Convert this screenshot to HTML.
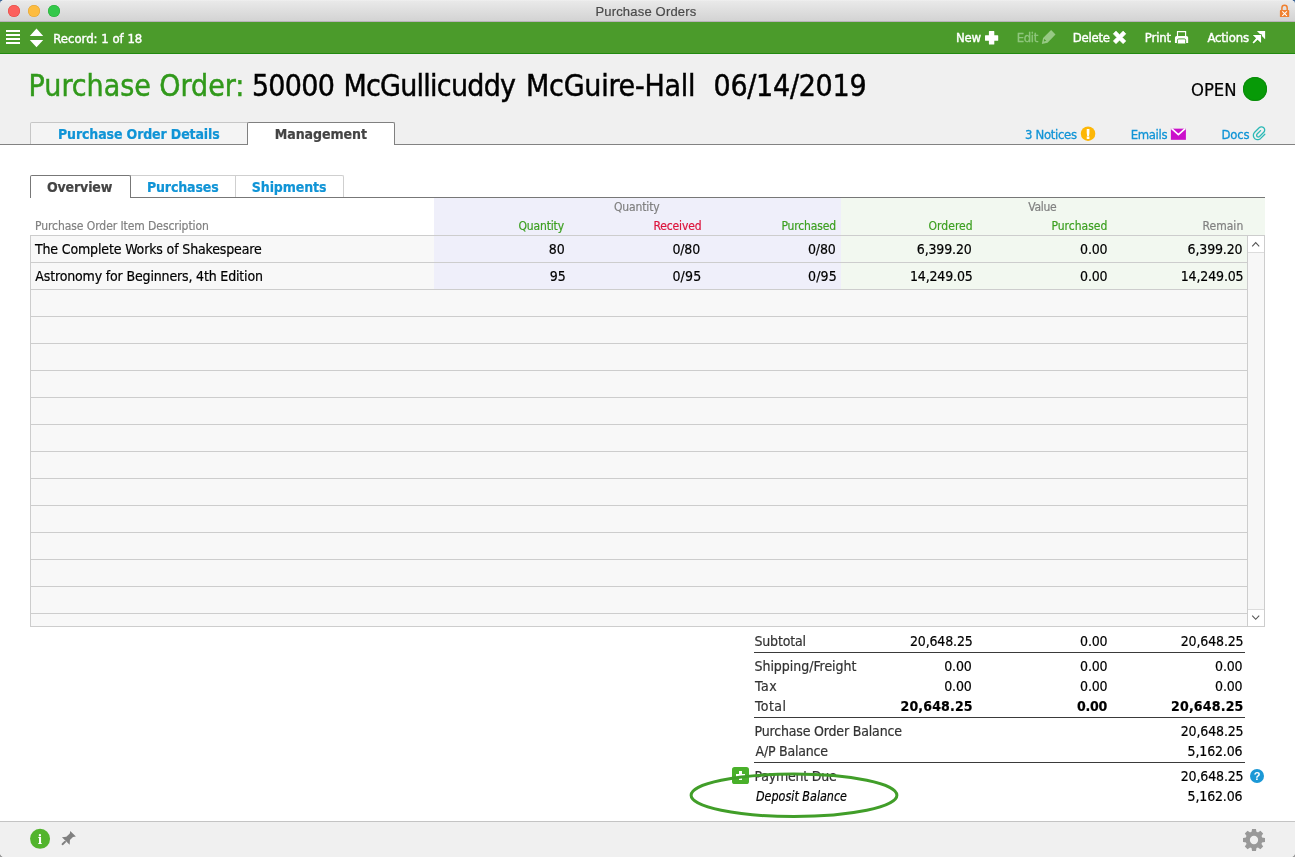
<!DOCTYPE html>
<html><head><meta charset="utf-8"><title>Purchase Orders</title>
<style>
*{box-sizing:border-box;margin:0;padding:0}
html,body{width:1295px;height:857px;overflow:hidden;background:linear-gradient(#3d6696 0,#3d6696 50%,#9a9a9a 50%,#9a9a9a 100%)}
body{font-family:"DejaVu Sans Condensed","DejaVu Sans","Liberation Sans",sans-serif;font-stretch:condensed;font-size:14px;color:#000}
#win{position:absolute;left:0;top:0;width:1295px;height:857px;background:#fff;border-radius:4.5px;overflow:hidden}
.a{position:absolute}
.t{position:absolute;white-space:nowrap;-webkit-text-stroke:0.2px}
svg{position:absolute;overflow:visible}
#txt{position:absolute;left:0;top:0;width:1295px;height:857px;will-change:transform}
</style></head><body>
<div id="win">
<!-- title bar -->
<div class="a" style="left:0;top:0;width:1295px;height:22px;background:linear-gradient(#f2f2f2 0,#e9e9e9 1px,#d3d3d3 21px,#b9b3b9 21px)"></div>
<div class="a" style="left:8px;top:5px;width:12px;height:12px;border-radius:50%;background:#fc615d;box-shadow:inset 0 0 0 0.5px #e1463f"></div>
<div class="a" style="left:28px;top:5px;width:12px;height:12px;border-radius:50%;background:#fdbc40;box-shadow:inset 0 0 0 0.5px #dfa133"></div>
<div class="a" style="left:48px;top:5px;width:12px;height:12px;border-radius:50%;background:#34c84a;box-shadow:inset 0 0 0 0.5px #26ab36"></div>
<!-- green bar -->
<div class="a" style="left:0;top:22px;width:1295px;height:32px;background:#4b9b2b;border-bottom:1px solid #218a10"></div>
<div class="a" style="left:6px;top:30px;width:14px;height:2px;background:#fff;box-shadow:0 4px 0 #fff,0 8px 0 #fff,0 12px 0 #fff"></div>
<!-- header -->
<div class="a" style="left:0;top:54px;width:1295px;height:90px;background:#f0f0f0"></div>
<div class="a" style="left:0;top:144px;width:1295px;height:1px;background:#828282"></div>
<div class="a" style="left:1243px;top:77px;width:24px;height:24px;border-radius:50%;background:#079a07;box-shadow:inset 0 0 0 1px #0b8c0b"></div>
<!-- main tabs -->
<div class="a" style="left:30px;top:122px;width:218px;height:22px;background:#f4f4f4;border:1px solid #c6c6c6;border-bottom:none;border-radius:2px 0 0 0"></div>
<div class="a" style="left:247px;top:122px;width:148px;height:23px;background:#fff;border:1px solid #808080;border-bottom:none;border-radius:2px 2px 0 0"></div>
<!-- sub tabs -->
<div class="a" style="left:30px;top:197px;width:1235px;height:1px;background:#777"></div>
<div class="a" style="left:130px;top:175px;width:106px;height:22px;background:#fff;border:1px solid #cfcfcf;border-bottom:none"></div>
<div class="a" style="left:235px;top:175px;width:109px;height:22px;background:#fff;border:1px solid #cfcfcf;border-bottom:none;border-radius:0 2px 0 0"></div>
<div class="a" style="left:30px;top:175px;width:101px;height:23px;background:#fff;border:1px solid #777;border-bottom:none;border-radius:2px 2px 0 0"></div>
<!-- column header bands -->
<div class="a" style="left:434px;top:198px;width:407px;height:37px;background:#efeffa"></div>
<div class="a" style="left:841px;top:198px;width:424px;height:37px;background:#f2f8f0"></div>
<!-- table -->
<div class="a" style="left:30px;top:235px;width:1235px;height:392px;background:#f8f8f8;border:1px solid #cdcdcd"></div>
<div class="a" style="left:434px;top:236px;width:407px;height:53px;background:#efeffa"></div>
<div class="a" style="left:841px;top:236px;width:406px;height:53px;background:#f2f8f0"></div>
<div class="a" style="left:31px;top:262px;width:1216px;height:352px;background:repeating-linear-gradient(#cdcdcd 0,#cdcdcd 1px,transparent 1px,transparent 27px)"></div>
<!-- scrollbar -->
<div class="a" style="left:1247px;top:235px;width:18px;height:392px;background:#f7f7f7;border:1px solid #cdcdcd"></div>
<div class="a" style="left:1248px;top:236px;width:16px;height:17px;background:#fff;border-bottom:1px solid #dcdcdc"></div>
<div class="a" style="left:1248px;top:609px;width:16px;height:17px;background:#fff;border-top:1px solid #dcdcdc"></div>
<!-- totals lines -->
<div class="a" style="left:754px;top:652px;width:491px;height:1px;background:#3a3a3a"></div>
<div class="a" style="left:754px;top:717px;width:491px;height:1px;background:#3a3a3a"></div>
<div class="a" style="left:754px;top:762px;width:491px;height:1px;background:#3a3a3a"></div>
<!-- footer -->
<div class="a" style="left:0;top:821px;width:1295px;height:36px;background:#f0f0f0;border-top:1px solid #c4c4c4"></div>
<!-- TEXT -->

<div id="txt">
<div class="t" style="left:595.40px;top:4.00px;font-size:13px;line-height:15px;letter-spacing:0.188px;color:#4a4a4a;font-family:'Liberation Sans',sans-serif;font-stretch:normal;">Purchase Orders</div>
<div class="t" style="left:53.30px;top:31.00px;font-size:13px;line-height:15px;color:#fff;-webkit-text-stroke:0.4px #fff;">Record: 1 of 18</div>
<div class="t" style="left:956.00px;top:30.00px;font-size:13px;line-height:15px;letter-spacing:-0.223px;color:#fff;-webkit-text-stroke:0.4px #fff;">New</div>
<div class="t" style="left:1016.70px;top:30.00px;font-size:13px;line-height:15px;letter-spacing:-0.322px;color:#8fc67d;-webkit-text-stroke:0.3px;">Edit</div>
<div class="t" style="left:1072.80px;top:30.00px;font-size:13px;line-height:15px;letter-spacing:-0.267px;color:#fff;-webkit-text-stroke:0.4px #fff;">Delete</div>
<div class="t" style="left:1144.80px;top:30.00px;font-size:13px;line-height:15px;letter-spacing:-0.123px;color:#fff;-webkit-text-stroke:0.4px #fff;">Print</div>
<div class="t" style="left:1207.40px;top:30.00px;font-size:13px;line-height:15px;letter-spacing:-0.183px;color:#fff;-webkit-text-stroke:0.4px #fff;">Actions</div>
<div class="t" style="left:28.60px;top:67.50px;font-size:30px;line-height:35px;letter-spacing:-0.031px;color:#31991b;-webkit-text-stroke:0.45px;">Purchase Order:</div>
<div class="t" style="left:251.90px;top:67.50px;font-size:30px;line-height:35px;letter-spacing:-0.693px;-webkit-text-stroke:0.45px;">50000</div>
<div class="t" style="left:343.40px;top:67.50px;font-size:30px;line-height:35px;letter-spacing:-0.744px;-webkit-text-stroke:0.45px;">McGullicuddy</div>
<div class="t" style="left:526.10px;top:67.50px;font-size:30px;line-height:35px;letter-spacing:-0.262px;-webkit-text-stroke:0.45px;">McGuire-Hall</div>
<div class="t" style="left:713.50px;top:67.50px;font-size:30px;line-height:35px;letter-spacing:-0.274px;-webkit-text-stroke:0.45px;">06/14/2019</div>
<div class="t" style="left:1191.00px;top:79.60px;font-size:17px;line-height:20px;transform:scaleX(1.0753);transform-origin:0 0;">OPEN</div>
<div class="t" style="left:1025.00px;top:126.60px;font-size:13px;line-height:15px;letter-spacing:-0.314px;color:#1094d6;-webkit-text-stroke:0.3px;">3 Notices</div>
<div class="t" style="left:1130.70px;top:126.60px;font-size:13px;line-height:15px;letter-spacing:-0.350px;color:#1094d6;-webkit-text-stroke:0.3px;">Emails</div>
<div class="t" style="left:1221.40px;top:126.60px;font-size:13px;line-height:15px;letter-spacing:-0.197px;color:#1094d6;-webkit-text-stroke:0.3px;">Docs</div>
<div class="t" style="left:58.00px;top:125.70px;font-size:14px;line-height:16px;letter-spacing:-0.133px;color:#1094d6;font-weight:bold;">Purchase Order Details</div>
<div class="t" style="left:274.70px;top:125.70px;font-size:14px;line-height:16px;letter-spacing:-0.044px;color:#444;font-weight:bold;">Management</div>
<div class="t" style="left:47.00px;top:178.80px;font-size:14px;line-height:16px;letter-spacing:-0.149px;color:#444;font-weight:bold;">Overview</div>
<div class="t" style="left:146.90px;top:178.80px;font-size:14px;line-height:16px;letter-spacing:-0.136px;color:#1094d6;font-weight:bold;">Purchases</div>
<div class="t" style="left:251.80px;top:178.80px;font-size:14px;line-height:16px;letter-spacing:-0.104px;color:#1094d6;font-weight:bold;">Shipments</div>
<div class="t" style="left:35.00px;top:218.50px;font-size:12px;line-height:14px;letter-spacing:-0.071px;color:#808080;">Purchase Order Item Description</div>
<div class="t" style="left:614.00px;top:200.40px;font-size:12px;line-height:14px;letter-spacing:-0.150px;color:#808080;">Quantity</div>
<div class="t" style="left:1028.30px;top:200.40px;font-size:12px;line-height:14px;letter-spacing:-0.303px;color:#808080;">Value</div>
<div class="t" style="left:518.49px;top:218.50px;font-size:12px;line-height:14px;letter-spacing:-0.150px;color:#3c9f20;">Quantity</div>
<div class="t" style="left:653.53px;top:218.50px;font-size:12px;line-height:14px;letter-spacing:-0.150px;color:#dc143c;">Received</div>
<div class="t" style="left:781.42px;top:218.50px;font-size:12px;line-height:14px;letter-spacing:-0.150px;color:#3c9f20;">Purchased</div>
<div class="t" style="left:928.60px;top:218.50px;font-size:12px;line-height:14px;letter-spacing:0.027px;color:#3c9f20;">Ordered</div>
<div class="t" style="left:1051.40px;top:218.50px;font-size:12px;line-height:14px;letter-spacing:0.015px;color:#3c9f20;">Purchased</div>
<div class="t" style="left:1202.50px;top:218.50px;font-size:12px;line-height:14px;letter-spacing:0.032px;color:#808080;">Remain</div>
<div class="t" style="left:34.90px;top:240.50px;font-size:14px;line-height:16px;letter-spacing:-0.146px;">The Complete Works of Shakespeare</div>
<div class="t" style="left:548.84px;top:240.50px;font-size:14px;line-height:16px;letter-spacing:-0.150px;">80</div>
<div class="t" style="left:672.40px;top:240.50px;font-size:14px;line-height:16px;letter-spacing:-0.156px;">0/80</div>
<div class="t" style="left:808.00px;top:240.50px;font-size:14px;line-height:16px;letter-spacing:-0.156px;">0/80</div>
<div class="t" style="left:916.79px;top:240.50px;font-size:14px;line-height:16px;letter-spacing:-0.150px;">6,399.20</div>
<div class="t" style="left:1080.03px;top:240.50px;font-size:14px;line-height:16px;letter-spacing:-0.150px;">0.00</div>
<div class="t" style="left:1187.59px;top:240.50px;font-size:14px;line-height:16px;letter-spacing:-0.150px;">6,399.20</div>
<div class="t" style="left:35.30px;top:267.50px;font-size:14px;line-height:16px;letter-spacing:-0.159px;">Astronomy for Beginners, 4th Edition</div>
<div class="t" style="left:549.84px;top:267.50px;font-size:14px;line-height:16px;letter-spacing:-0.150px;">95</div>
<div class="t" style="left:672.40px;top:267.50px;font-size:14px;line-height:16px;letter-spacing:0.177px;">0/95</div>
<div class="t" style="left:808.00px;top:267.50px;font-size:14px;line-height:16px;letter-spacing:0.177px;">0/95</div>
<div class="t" style="left:909.93px;top:267.50px;font-size:14px;line-height:16px;letter-spacing:-0.150px;">14,249.05</div>
<div class="t" style="left:1080.03px;top:267.50px;font-size:14px;line-height:16px;letter-spacing:-0.150px;">0.00</div>
<div class="t" style="left:1180.73px;top:267.50px;font-size:14px;line-height:16px;letter-spacing:-0.150px;">14,249.05</div>
<div class="t" style="left:754.50px;top:633.30px;font-size:14px;line-height:16px;letter-spacing:-0.196px;color:#333;">Subtotal</div>
<div class="t" style="left:909.93px;top:633.30px;font-size:14px;line-height:16px;letter-spacing:-0.150px;">20,648.25</div>
<div class="t" style="left:1080.03px;top:633.30px;font-size:14px;line-height:16px;letter-spacing:-0.150px;">0.00</div>
<div class="t" style="left:1180.73px;top:633.30px;font-size:14px;line-height:16px;letter-spacing:-0.150px;">20,648.25</div>
<div class="t" style="left:754.50px;top:658.20px;font-size:14px;line-height:16px;letter-spacing:-0.036px;color:#333;">Shipping/Freight</div>
<div class="t" style="left:944.23px;top:658.20px;font-size:14px;line-height:16px;letter-spacing:-0.150px;">0.00</div>
<div class="t" style="left:1080.03px;top:658.20px;font-size:14px;line-height:16px;letter-spacing:-0.150px;">0.00</div>
<div class="t" style="left:1215.03px;top:658.20px;font-size:14px;line-height:16px;letter-spacing:-0.150px;">0.00</div>
<div class="t" style="left:755.10px;top:678.30px;font-size:14px;line-height:16px;letter-spacing:0.505px;color:#333;">Tax</div>
<div class="t" style="left:944.23px;top:678.30px;font-size:14px;line-height:16px;letter-spacing:-0.150px;">0.00</div>
<div class="t" style="left:1080.03px;top:678.30px;font-size:14px;line-height:16px;letter-spacing:-0.150px;">0.00</div>
<div class="t" style="left:1215.03px;top:678.30px;font-size:14px;line-height:16px;letter-spacing:-0.150px;">0.00</div>
<div class="t" style="left:755.10px;top:698.00px;font-size:14px;line-height:16px;letter-spacing:0.433px;color:#333;">Total</div>
<div class="t" style="left:900.50px;top:698.00px;font-size:14px;line-height:16px;letter-spacing:0.143px;font-weight:bold;">20,648.25</div>
<div class="t" style="left:1077.00px;top:698.00px;font-size:14px;line-height:16px;letter-spacing:-0.238px;font-weight:bold;">0.00</div>
<div class="t" style="left:1171.00px;top:698.00px;font-size:14px;line-height:16px;letter-spacing:0.181px;font-weight:bold;">20,648.25</div>
<div class="t" style="left:754.50px;top:723.10px;font-size:14px;line-height:16px;letter-spacing:-0.176px;color:#333;">Purchase Order Balance</div>
<div class="t" style="left:1180.73px;top:723.10px;font-size:14px;line-height:16px;letter-spacing:-0.150px;">20,648.25</div>
<div class="t" style="left:755.50px;top:743.00px;font-size:14px;line-height:16px;letter-spacing:-0.224px;color:#333;">A/P Balance</div>
<div class="t" style="left:1187.59px;top:743.00px;font-size:14px;line-height:16px;letter-spacing:-0.150px;">5,162.06</div>
<div class="t" style="left:754.50px;top:767.80px;font-size:14px;line-height:16px;letter-spacing:-0.226px;color:#333;">Payment Due</div>
<div class="t" style="left:1180.73px;top:767.80px;font-size:14px;line-height:16px;letter-spacing:-0.150px;">20,648.25</div>
<div class="t" style="left:755.50px;top:787.80px;font-size:14px;line-height:16px;font-style:italic;transform:scaleX(0.8886);transform-origin:0 0;">Deposit Balance</div>
<div class="t" style="left:1187.59px;top:787.80px;font-size:14px;line-height:16px;letter-spacing:-0.150px;">5,162.06</div>
</div>
<!-- icon overlay -->
<svg style="left:0;top:0" width="1295" height="857" viewBox="0 0 1295 857">
<!-- lock -->
<path d="M1281.9 10.6V8a2.65 2.65 0 0 1 5.3 0V10.6" fill="none" stroke="#f0802f" stroke-width="1.5"/><rect x="1279.9" y="10.1" width="9.3" height="7" rx="0.7" fill="#f0802f"/><path d="M1282.3 11.3l4.6 4.6M1286.9 11.3l-4.6 4.6" stroke="#fff" stroke-width="1.05"/>
<!-- up/down -->
<path d="M36.5 28.6L43.2 36H29.8zM29.8 40H43.2L36.5 47.3z" fill="#fff"/>
<!-- New plus -->
<path d="M989.4 31h4.4a.5.5 0 0 1 .5.5V35.3h3.4a.5.5 0 0 1 .5.5v4.4a.5.5 0 0 1-.5.5h-3.4v3.3a.5.5 0 0 1-.5.5h-4.4a.5.5 0 0 1-.5-.5V40.7h-3.4a.5.5 0 0 1-.5-.5v-4.4a.5.5 0 0 1 .5-.5h3.4V31.5a.5.5 0 0 1 .5-.5z" fill="#fff"/>
<!-- Edit pencil -->
<path d="M1051.1 30.1L1055.5 34.5 1047.55 42.7 1041.8 44 1043.05 38.05zM1044.2 39.1L1046.3 40.75 1043.9 41.5z" fill="#97c984" fill-rule="evenodd"/>
<!-- Delete X -->
<path d="M1116 31.1L1119.55 34.65 1123.1 31.1 1125.85 33.85 1122.3 37.4 1125.85 40.95 1123.1 43.7 1119.55 40.15 1116 43.7 1113.25 40.95 1116.8 37.4 1113.25 33.85z" fill="#fff" stroke="#fff" stroke-width="0.6" stroke-linejoin="round"/>
<!-- Print -->
<path d="M1177.5 36.2V31.55h8.1V36.2" fill="none" stroke="#fff" stroke-width="1.15"/>
<path d="M1176.7 35.9h9.7a1.75 1.75 0 0 1 1.75 1.75V43.05H1174.95V37.65a1.75 1.75 0 0 1 1.75-1.75z" fill="#fff"/>
<path d="M1177.45 43.4V40.2a1.3 1.3 0 0 1 1.3-1.3h5.6a1.3 1.3 0 0 1 1.3 1.3V43.4" fill="#fff" stroke="#3f9a22" stroke-width="0.9"/>
<!-- Actions arrow -->
<path d="M1256.9 31H1265.1V39.2z" fill="#fff"/>
<path d="M1252.8 35.1H1261.1V43.1L1257.55 39.7 1253.7 43.45 1252.5 42.4 1256.1 38.3z" fill="#fff" stroke="#3f9a22" stroke-width="1.7" stroke-linejoin="round" paint-order="stroke fill"/>
<!-- notice -->
<circle cx="1088.05" cy="133.7" r="7.25" fill="#fdb707"/>
<text x="1088.1" y="138.8" text-anchor="middle" font-size="14.6" font-weight="bold" fill="#fff" style="font-family:'DejaVu Sans',sans-serif;font-stretch:normal">!</text>
<!-- envelope -->
<rect x="1170.9" y="128.1" width="15" height="11.7" fill="#cb10cb"/><path d="M1171.4 128.3L1178.4 134.6 1185.4 128.3" fill="none" stroke="#fff" stroke-width="1.6"/><rect x="1170.9" y="127.7" width="15" height="0.9" fill="#f0f0f0"/>
<!-- paperclip -->
<path d="M1264.80 134.28 L1260.69 138.39 L1259.94 138.99 L1259.07 139.41 L1258.13 139.62 L1257.17 139.62 L1256.24 139.41 L1255.37 138.99 L1254.62 138.39 L1254.02 137.64 L1253.60 136.78 L1253.39 135.84 L1253.39 134.88 L1253.60 133.94 L1254.02 133.08 L1254.62 132.32 L1259.18 127.77 L1259.74 127.32 L1260.39 127.01 L1261.09 126.85 L1261.81 126.85 L1262.51 127.01 L1263.16 127.32 L1263.72 127.77 L1264.17 128.33 L1264.48 128.98 L1264.65 129.68 L1264.65 130.40 L1264.48 131.10 L1264.17 131.75 L1263.72 132.31 L1259.54 136.49 L1259.24 136.73 L1258.90 136.90 L1258.52 136.98 L1258.14 136.98 L1257.77 136.90 L1257.42 136.73 L1257.12 136.49 L1256.88 136.19 L1256.71 135.85 L1256.63 135.47 L1256.63 135.09 L1256.71 134.71 L1256.88 134.37 L1257.12 134.07 L1260.57 130.61" fill="none" stroke="#2bb9b6" stroke-width="1.3" stroke-linecap="round" stroke-linejoin="round"/>
<!-- scroll chevrons -->
<path d="M1252.2 246.3L1255.7 242.6 1259.2 246.3" fill="none" stroke="#555" stroke-width="1.1"/>
<path d="M1252.2 615.6L1255.7 619.3 1259.2 615.6" fill="none" stroke="#555" stroke-width="1.1"/>
<!-- green plus button -->
<rect x="732" y="767" width="17" height="17" rx="2.6" fill="#49b02a"/><path d="M739 771h3v3h3v3h-3v3h-3v-3h-3v-3h3z" fill="#fff"/>
<!-- help -->
<circle cx="1257" cy="776" r="7" fill="#1b98d6"/>
<text x="1257" y="780" text-anchor="middle" font-size="11" font-weight="bold" fill="#fff" font-family="'Liberation Sans',sans-serif">?</text>
<!-- info -->
<circle cx="40.05" cy="838.85" r="10" fill="#52b42d"/>
<text x="39.9" y="844" text-anchor="middle" font-size="13" font-weight="bold" fill="#fff" font-family="'DejaVu Serif','Liberation Serif',serif">i</text>
<!-- pin -->
<path d="M70.26 831L75.87 836.47 72.99 837.07 69.96 840.11 69.65 844.81 61.92 837.23 66.32 836.77 69.8 833.58z" fill="#808080"/><path d="M65.1 841.78L62.52 844.2" stroke="#808080" stroke-width="1.9" stroke-linecap="round"/>
<!-- gear -->
<g transform="translate(1254 840)" fill="#999"><path d="M-1.95 -11h3.9l.6 3.4h-5.1z"/><path d="M-1.95 -11h3.9l.6 3.4h-5.1z" transform="rotate(45)"/><path d="M-1.95 -11h3.9l.6 3.4h-5.1z" transform="rotate(90)"/><path d="M-1.95 -11h3.9l.6 3.4h-5.1z" transform="rotate(135)"/><path d="M-1.95 -11h3.9l.6 3.4h-5.1z" transform="rotate(180)"/><path d="M-1.95 -11h3.9l.6 3.4h-5.1z" transform="rotate(225)"/><path d="M-1.95 -11h3.9l.6 3.4h-5.1z" transform="rotate(270)"/><path d="M-1.95 -11h3.9l.6 3.4h-5.1z" transform="rotate(315)"/><circle r="6.3" fill="none" stroke="#999" stroke-width="4.3"/></g>
<!-- annotation ellipse -->
<ellipse cx="794" cy="795.3" rx="102.9" ry="21.2" fill="none" stroke="#419e29" stroke-width="3"/>
</svg>
</div>
</body></html>
